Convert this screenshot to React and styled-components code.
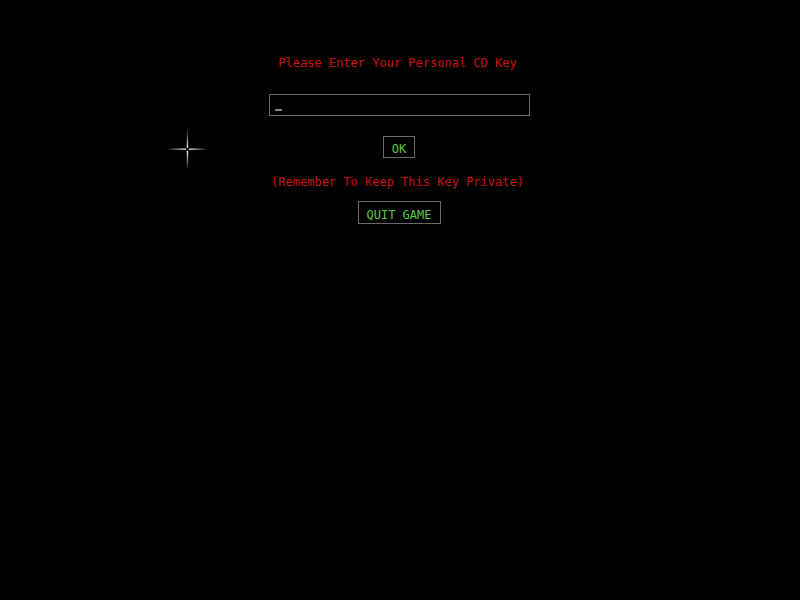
import React from "react";
import styled, { createGlobalStyle } from "styled-components";

const Global = createGlobalStyle`
  html, body { margin: 0; padding: 0; background: #000; }
  #root { min-height: 600px; }
`;

const Screen = styled.div`
  position: relative;
  width: 800px;
  height: 600px;
  background: #000;
  display: flex;
  flex-direction: column;
  align-items: center;
  padding: 56px 2px 0 0;
  box-sizing: border-box;
  font-family: "DejaVu Sans Mono", "Liberation Mono", monospace;
  font-size: 12px;
  line-height: 14px;
`;

const Label = styled.div`
  color: #c81212;
  margin-top: ${(p) => p.$top || 0}px;
  margin-left: -3px;
  white-space: pre;
`;

const KeyField = styled.div`
  margin-top: 24px;
  width: 261px;
  height: 22px;
  box-sizing: border-box;
  border: 1px solid #6a6a6a;
  display: flex;
  align-items: flex-end;
  padding: 0 0 4px 5px;
`;

const Caret = styled.span`
  display: block;
  width: 7px;
  height: 2px;
  background: #8a8a8a;
`;

const Button = styled.button`
  margin-top: ${(p) => p.$top}px;
  width: ${(p) => p.$w}px;
  height: ${(p) => p.$h}px;
  box-sizing: border-box;
  background: #000;
  border: 1px solid #6a6a6a;
  color: #55c844;
  font-family: inherit;
  font-size: 12px;
  line-height: 14px;
  padding: 4px 0 0 0;
  cursor: pointer;
`;

const Pointer = styled.svg`
  position: absolute;
  left: 167px;
  top: 129px;
`;

function Crosshair() {
  return (
    <Pointer width="41" height="41" viewBox="0 0 41 41">
      <defs>
        <linearGradient id="hz" x1="0" x2="1" y1="0" y2="0">
          <stop offset="0" stopColor="#fff" stopOpacity="0" />
          <stop offset="0.45" stopColor="#fff" stopOpacity="0.95" />
          <stop offset="0.55" stopColor="#fff" stopOpacity="0.95" />
          <stop offset="1" stopColor="#fff" stopOpacity="0" />
        </linearGradient>
        <linearGradient id="vt" x1="0" x2="0" y1="0" y2="1">
          <stop offset="0" stopColor="#fff" stopOpacity="0" />
          <stop offset="0.45" stopColor="#fff" stopOpacity="0.95" />
          <stop offset="0.55" stopColor="#fff" stopOpacity="0.95" />
          <stop offset="1" stopColor="#fff" stopOpacity="0" />
        </linearGradient>
      </defs>
      <rect x="0" y="19.5" width="41" height="1.3" fill="url(#hz)" />
      <rect x="19.8" y="0" width="1.3" height="41" fill="url(#vt)" />
      <rect x="19" y="19" width="3" height="3" fill="#111" />
    </Pointer>
  );
}

export default function App() {
  return (
    <>
      <Global />
      <Screen>
        <Label>Please Enter Your Personal CD Key</Label>
        <KeyField>
          <Caret />
        </KeyField>
        <Button $top={20} $w={32} $h={22}>OK</Button>
        <Label $top={17}>(Remember To Keep This Key Private)</Label>
        <Button $top={12} $w={83} $h={23}>QUIT GAME</Button>
        <Crosshair />
      </Screen>
    </>
  );
}
